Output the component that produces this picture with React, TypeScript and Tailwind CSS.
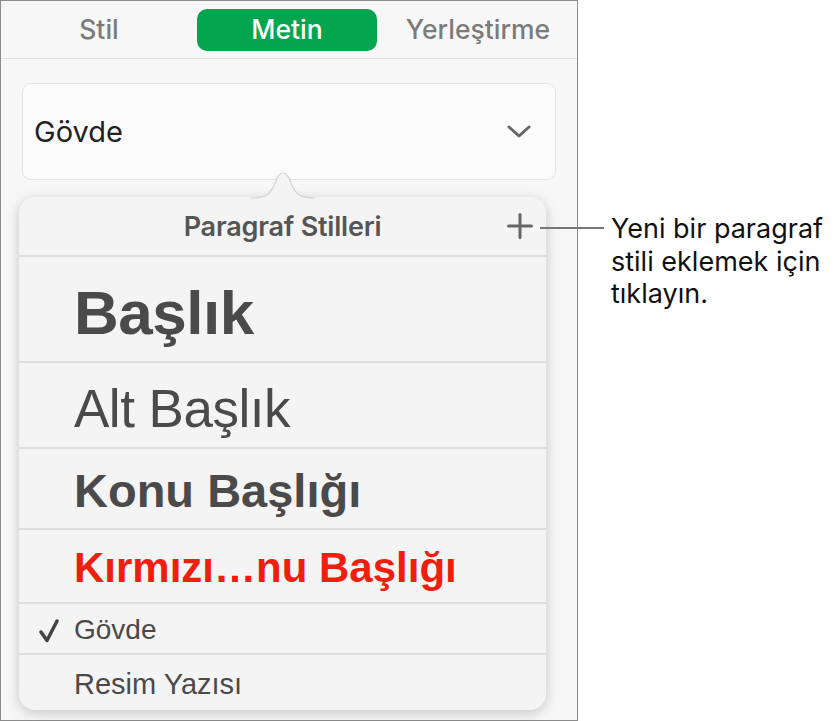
const rows = [
  { label: "Başlık", h: "h-[106px] pt-[8px]", cls: "text-[62px] font-bold text-[#4a4a4a] tracking-[-0.5px]" },
  { label: "Alt Başlık", h: "h-[86px] pt-[6px]", cls: "text-[53px] text-[#4a4a4a] tracking-[-0.5px]" },
  { label: "Konu Başlığı", h: "h-[81px] pt-[3px]", cls: "text-[47px] font-bold text-[#4a4a4a]" },
  { label: "Kırmızı…nu Başlığı", h: "h-[74px] pt-[3px]", cls: "text-[42px] font-bold text-[#ee1f0f]" },
  { label: "Gövde", h: "h-[51px] pt-[3px]", cls: "text-[28px] text-[#4a4a4a]", checked: true },
  { label: "Resim Yazısı", h: "h-[55px] pt-[3px]", cls: "text-[29px] text-[#4a4a4a]" },
];

const App = () => {
  return (
    <div className="w-[836px] h-[721px] bg-white flex relative font-['Liberation_Sans',Arial,sans-serif]">
      {/* panel */}
      <div className="w-[578px] h-[721px] shrink-0 border border-[#8c8c8c] bg-[#f7f7f7] flex flex-col">
        {/* tabs */}
        <div className="h-[58px] shrink-0 border-b border-[#e0e0e0] flex items-center font-['Inter',sans-serif] text-[26.5px] font-medium">
          <div className="w-[196px] text-center text-[#7b7b7b]">Stil</div>
          <div className="w-[180px] h-[42px] rounded-[10px] bg-[#03a64f] text-white flex items-center justify-center">
            Metin
          </div>
          <div className="flex-1 text-center text-[#7b7b7b] pl-[2px]">Yerleştirme</div>
        </div>

        {/* dropdown */}
        <div className="mx-[21px] mt-[24px] h-[97px] shrink-0 rounded-[9px] border border-[#e3e3e3] bg-[#fbfbfb] flex items-center justify-between pl-[11px] pr-[24px]">
          <span className="font-['Inter',sans-serif] text-[29px] text-[#222]">Gövde</span>
          <svg width="24" height="14" viewBox="0 0 24 14" fill="none">
            <path d="M2 2 L12 11 L22 2" stroke="#666" strokeWidth="3" strokeLinecap="round" strokeLinejoin="round" />
          </svg>
        </div>

        {/* popover */}
        <div className="relative ml-[18px] mt-[17px] w-[527px]">
          <svg className="absolute left-[232px] top-[-27px] z-10" width="64" height="29" viewBox="0 0 64 29" fill="none">
            <path d="M0 28 C14 28 20 26 26 8 Q32 -2 38 8 C44 26 50 28 64 28 L64 29 L0 29 Z" fill="#f4f4f4" />
            <path d="M0 28 C14 28 20 26 26 8 Q32 -2 38 8 C44 26 50 28 64 28" stroke="#d2d2d2" strokeWidth="1.2" />
          </svg>
          <div className="rounded-[16px] bg-[#f4f4f4] shadow-[0_3px_14px_rgba(0,0,0,0.2)] overflow-hidden">
            <div className="relative h-[60px] flex items-center justify-center pt-[2px] border-b-2 border-[#dedede]">
              <span className="font-['Inter',sans-serif] text-[27px] font-semibold text-[#555] tracking-[-0.2px]">Paragraf Stilleri</span>
              <svg className="absolute right-[13px] top-[16px]" width="26" height="26" viewBox="0 0 26 26" fill="none">
                <path d="M13 1.5 V24.5 M1.5 13 H24.5" stroke="#666" strokeWidth="3" strokeLinecap="round" />
              </svg>
            </div>
            {rows.map((r, i) => (
              <div
                key={r.label}
                className={`${r.h} relative flex items-center pl-[55px] ${i < rows.length - 1 ? "border-b-2 border-[#dedede]" : ""}`}
              >
                {r.checked && (
                  <svg className="absolute left-[20px] top-[15px]" width="20" height="24" viewBox="0 0 20 24" fill="none">
                    <path d="M2 13 L8 21.5 L18 2" stroke="#444" strokeWidth="3.5" strokeLinecap="round" strokeLinejoin="round" />
                  </svg>
                )}
                <span className={`${r.cls} leading-none whitespace-nowrap`}>{r.label}</span>
              </div>
            ))}
          </div>
        </div>
      </div>

      {/* callout */}
      <div className="absolute left-[540px] top-[227px] w-[64px] h-[2px] bg-[#777]" />
      <div className="pl-[33px] pt-[213px] font-['Inter',sans-serif] text-[27px] leading-[32.5px] text-[#111] whitespace-nowrap">
        <div>Yeni bir paragraf</div>
        <div>stili eklemek için</div>
        <div>tıklayın.</div>
      </div>
    </div>
  );
};

export default App;
